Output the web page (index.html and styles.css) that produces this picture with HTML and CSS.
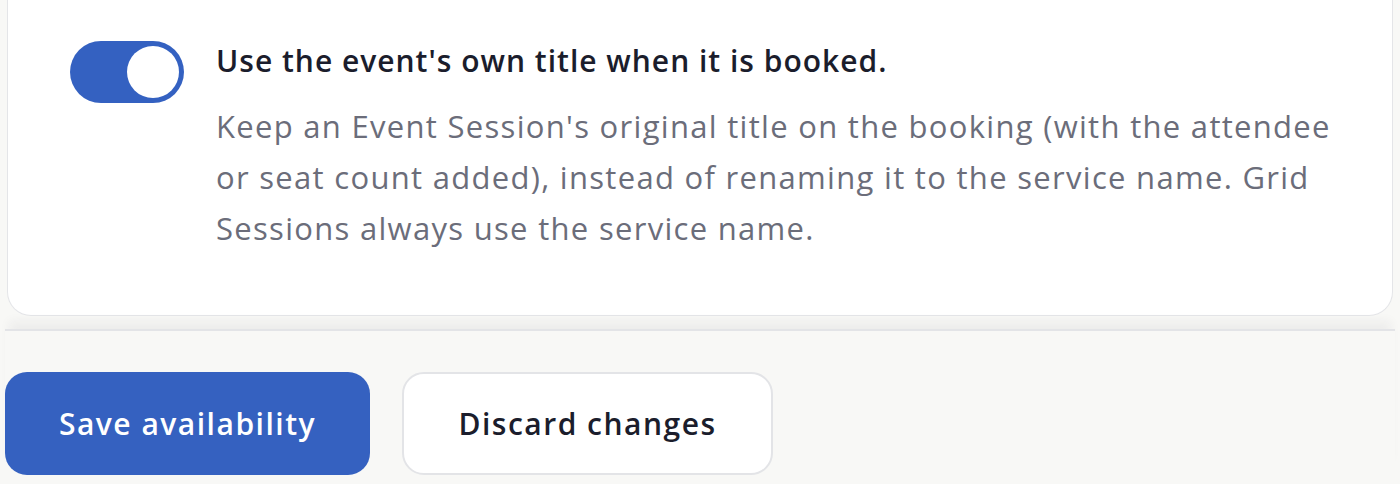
FILE: index.html
```html
<!DOCTYPE html>
<html lang="en">
<head>
<meta charset="utf-8">
<title>Availability settings</title>
<link rel="stylesheet" href="styles.css">
</head>
<body>
<main class="page">
  <section class="card">
    <div class="setting">
      <button class="toggle is-on" type="button" role="switch" aria-checked="true" aria-label="Use the event's own title">
        <span class="toggle-knob"></span>
      </button>
      <div class="setting-text">
        <h3 class="setting-title">Use the event's own title when it is booked.</h3>
        <p class="setting-desc">Keep an Event Session's original title on the booking (with the attendee or seat count added), instead of renaming it to the service name. Grid Sessions always use the service name.</p>
      </div>
    </div>
  </section>
  <footer class="actions">
    <button class="btn btn-primary" type="button">Save availability</button>
    <button class="btn btn-secondary" type="button">Discard changes</button>
  </footer>
</main>
</body>
</html>
```
FILE: styles.css
```css
* { box-sizing: border-box; }

html, body {
  margin: 0;
  background: #f8f8f6;
  font-family: "Open Sans", Lato, Arial, sans-serif;
  color: #1b1d2c;
}

.page {
  padding: 0 5px;
}

.card {
  margin: 0 2px;
  background: #ffffff;
  border: 1px solid #e4e5e8;
  border-top: 0;
  border-radius: 0 0 24px 24px;
  padding: 41px 55px 61px 62px;
}

.setting {
  display: flex;
  align-items: flex-start;
  gap: 32px;
}

.toggle {
  flex: none;
  width: 114px;
  height: 62px;
  border: 0;
  padding: 5px;
  border-radius: 31px;
  background: #3461c1;
  display: flex;
  justify-content: flex-end;
  align-items: center;
}

.toggle-knob {
  width: 52px;
  height: 52px;
  border-radius: 50%;
  background: #ffffff;
}

.setting-text {
  flex: 1;
}

.setting-title {
  margin: 0;
  font-size: 30px;
  line-height: 40px;
  font-weight: 600;
  letter-spacing: 1px;
  color: #1b1d2c;
}

.setting-desc {
  margin: 20px 0 0;
  font-size: 31px;
  line-height: 51px;
  letter-spacing: 1.3px;
  color: #6b6d7a;
}

.actions {
  margin-top: 13px;
  border-top: 2px solid #e3e4e7;
  box-shadow: 0 -12px 10px -4px rgba(30, 40, 60, 0.05);
  padding-top: 41px;
  display: flex;
  gap: 32px;
}

.btn {
  height: 103px;
  border-radius: 22px;
  font-family: inherit;
  font-size: 30px;
  font-weight: 600;
  letter-spacing: 1.5px;
  padding: 0 30px;
}

.btn-primary {
  background: #3561c0;
  border: 0;
  color: #ffffff;
  width: 365px;
}

.btn-secondary {
  background: #ffffff;
  border: 2px solid #e3e4e7;
  color: #1b1d2c;
  width: 371px;
}
```
